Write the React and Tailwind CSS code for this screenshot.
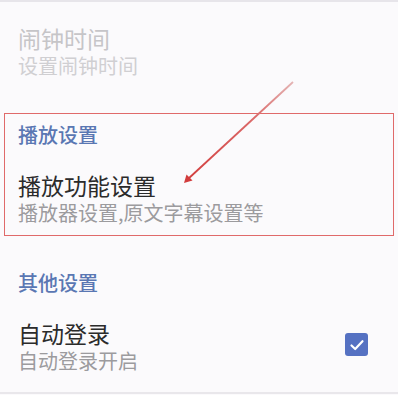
export default function App() {
  const font = { fontFamily: '"Noto Sans CJK SC", "Noto Sans", sans-serif' };
  return (
    <div
      className="relative w-[398px] h-[395px] overflow-hidden bg-[#fbfafc] flex flex-col font-['Noto_Sans_CJK_SC',sans-serif]"
      style={font}
    >
      <div className="h-[2px] bg-[#e7e5ea]" />
      <div className="flex-1 flex flex-col pl-[18px]">
        <div className="mt-[22px] text-[23px] leading-[28px] text-[#c6c5c8]">闹钟时间</div>
        <div className="text-[20px] leading-[28px] text-[#d0cfd2]">设置闹钟时间</div>

        <div className="mt-[41px] text-[20px] leading-[28px] font-medium text-[#5a77b3]">播放设置</div>
        <div className="mt-[22px] text-[23px] leading-[28px] text-[#2b2b2b]">播放功能设置</div>
        <div className="text-[20px] leading-[28px] text-[#9c9b9e]">播放器设置,原文字幕设置等</div>

        <div className="mt-[42px] text-[20px] leading-[28px] font-medium text-[#5a77b3]">其他设置</div>
        <div className="mt-[22px] flex items-start justify-between pr-[30px]">
          <div className="flex flex-col">
            <div className="text-[23px] leading-[28px] text-[#2b2b2b]">自动登录</div>
            <div className="text-[20px] leading-[28px] text-[#9c9b9e]">自动登录开启</div>
          </div>
          <div className="mt-[14px] w-[23px] h-[23px] rounded-[3px] bg-[#5571c2] flex items-center justify-center">
            <svg width="16" height="16" viewBox="0 0 16 16" fill="none">
              <path d="M2.5 8.5 L6.2 12 L13.5 4.2" stroke="white" strokeWidth="2.2" strokeLinecap="round" strokeLinejoin="round" />
            </svg>
          </div>
        </div>
      </div>
      <div className="h-[2px] bg-[#e9e7eb] mb-px" />

      <div className="absolute left-[4px] top-[113px] w-[390px] h-[123px] border border-[#e06a6a]" />
      <svg className="absolute left-0 top-0" width="398" height="395" viewBox="0 0 398 395">
        <defs>
          <linearGradient id="ar" x1="293" y1="82" x2="186" y2="181" gradientUnits="userSpaceOnUse">
            <stop offset="0" stopColor="#e4b4b4" />
            <stop offset="0.35" stopColor="#db6b6b" />
            <stop offset="1" stopColor="#d23c3c" />
          </linearGradient>
        </defs>
        <line x1="293" y1="82" x2="188" y2="179" stroke="url(#ar)" strokeWidth="1.8" />
        <path d="M184 183 L186.5 174.5 L192.5 180.5 Z" fill="#d23c3c" />
      </svg>
    </div>
  );
}
